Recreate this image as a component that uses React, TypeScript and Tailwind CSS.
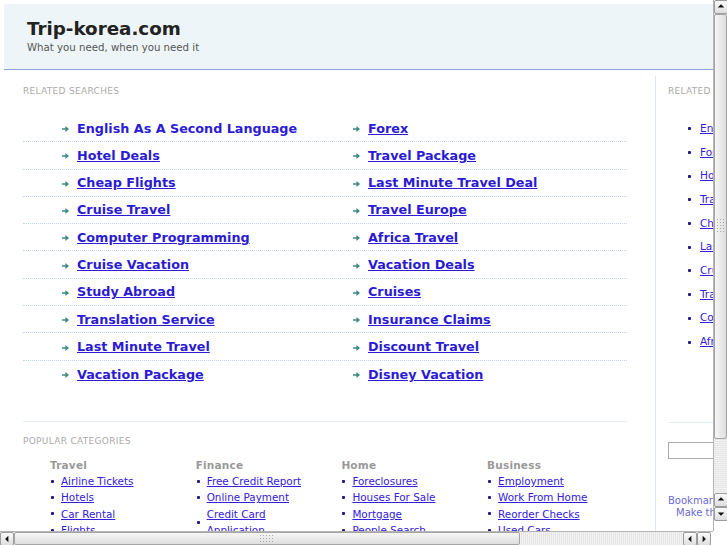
import React from "react";

const leftLinks = [
  "English As A Second Language",
  "Hotel Deals",
  "Cheap Flights",
  "Cruise Travel",
  "Computer Programming",
  "Cruise Vacation",
  "Study Abroad",
  "Translation Service",
  "Last Minute Travel",
  "Vacation Package",
];

const rightLinks = [
  "Forex",
  "Travel Package",
  "Last Minute Travel Deal",
  "Travel Europe",
  "Africa Travel",
  "Vacation Deals",
  "Cruises",
  "Insurance Claims",
  "Discount Travel",
  "Disney Vacation",
];

const sideLinks = [
  "English As A Second Language",
  "Forex",
  "Hotel Deals",
  "Travel Package",
  "Cheap Flights",
  "Last Minute Travel Deal",
  "Cruise Travel",
  "Travel Europe",
  "Computer Programming",
  "Africa Travel",
];

const categories = [
  { title: "Travel", links: ["Airline Tickets", "Hotels", "Car Rental", "Flights"] },
  { title: "Finance", links: ["Free Credit Report", "Online Payment", "Credit Card Application", "Bad Credit"] },
  { title: "Home", links: ["Foreclosures", "Houses For Sale", "Mortgage", "People Search"] },
  { title: "Business", links: ["Employment", "Work From Home", "Reorder Checks", "Used Cars"] },
];

const Arrow = () => (
  <svg width="7" height="6" viewBox="0 0 7 6" className="shrink-0 translate-y-[1px]">
    <path d="M0 2.2h3.4V0L7 3 3.4 6V3.8H0z" fill="#3d8a83" />
  </svg>
);

const Bullet = () => <span className="block w-[3px] h-[3px] bg-[#1c1a8a] shrink-0 rounded-[1px]" />;

const Grip = ({ vertical }: { vertical?: boolean }) => (
  <svg width={vertical ? 9 : 17} height={vertical ? 17 : 9} viewBox={vertical ? "0 0 9 17" : "0 0 17 9"}>
    {Array.from({ length: 15 }).map((_, i) => {
      const cols = vertical ? 3 : 5;
      const c = i % cols;
      const r = Math.floor(i / cols);
      return <rect key={i} x={1 + c * 3} y={1 + r * 3} width="1" height="1" fill="#a8a8a8" />;
    })}
  </svg>
);

const ArrowBtn = ({ dir }: { dir: "up" | "down" | "left" | "right" }) => {
  const paths: Record<string, string> = {
    up: "M3 7h7L6.5 3.5z",
    down: "M3 5h7L6.5 8.5z",
    left: "M8 3v7L4.5 6.5z",
    right: "M5 3v7L8.5 6.5z",
  };
  return (
    <div className="w-[14px] h-[14px] shrink-0 border border-[#9c9c9c] rounded-[2px] bg-gradient-to-b from-[#fbfbfb] to-[#dedede] flex items-center justify-center">
      <svg width="12" height="12" viewBox="0 0 13 13">
        <path d={paths[dir]} fill="#111" />
      </svg>
    </div>
  );
};

export default function App() {
  return (
    <div className="w-[727px] h-[545px] flex flex-col bg-white overflow-hidden font-['DejaVu_Sans',sans-serif]">
      <div className="flex flex-1 min-h-0">
        <div className="flex-1 min-w-0 overflow-hidden">
          <div className="w-[900px] pl-[4px] pt-[4px]">
            <div className="h-[66px] bg-[#eef5f8] border-b border-[#8fa2dc] pl-[23px] pt-[15px]">
              <div className="text-[18.3px] leading-[20px] font-bold text-[#222]">Trip-korea.com</div>
              <div className="text-[10.2px] leading-[13px] mt-[2px] text-[#555]">What you need, when you need it</div>
            </div>

            <div className="flex">
              <div className="w-[651px] shrink-0 pl-[19px] pt-[15px]">
                <div className="text-[9px] leading-[12px] tracking-[0.3px] text-[#aaa]">RELATED SEARCHES</div>
                <div className="w-[604px] mt-[18px]">
                  {leftLinks.map((l, i) => (
                    <div
                      key={l}
                      className={`flex h-[27.3px] ${i < leftLinks.length - 1 ? "border-b border-dotted border-[#c3d3ea]" : ""}`}
                    >
                      <div className="w-[302px] flex items-center gap-[8px] pl-[39px]">
                        <Arrow />
                        <a className={`text-[12.75px] font-bold text-[#2b1bd4] ${i === 0 ? "" : "underline"}`}>{l}</a>
                      </div>
                      <div className="w-[302px] flex items-center gap-[8px] pl-[28px]">
                        <Arrow />
                        <a className="text-[12.75px] font-bold text-[#2b1bd4] underline">{rightLinks[i]}</a>
                      </div>
                    </div>
                  ))}
                </div>
                <div className="w-[604px] h-px bg-[#e4edf5] mt-[33px]" />
                <div className="text-[9px] leading-[12px] tracking-[0.3px] text-[#aaa] mt-[13px]">POPULAR CATEGORIES</div>
                <div className="grid grid-cols-[145.7px_145.7px_145.7px_145.7px] ml-[27px] mt-[11px]">
                  {categories.map((c) => (
                    <div key={c.title}>
                      <div className="text-[10.5px] leading-[14px] font-bold text-[#999] tracking-[0.2px]">{c.title}</div>
                      <ul className="mt-[1px]">
                        {c.links.map((l) => (
                          <li key={l} className="flex items-center pl-[1px] gap-[7px]">
                            <Bullet />
                            <a className="w-[118px] text-[10.4px] leading-[16.4px] text-[#3320dd] underline">{l}</a>
                          </li>
                        ))}
                      </ul>
                    </div>
                  ))}
                </div>
              </div>

              <div className="w-[200px] shrink-0 mt-[6px] border-l border-[#dde7f1] pl-[12px] pt-[9px] h-[470px]">
                <div className="text-[9px] leading-[12px] tracking-[0.3px] text-[#aaa]">RELATED</div>
                <ul className="mt-[20px] pl-[20px]">
                  {sideLinks.map((l) => (
                    <li key={l} className="flex items-center h-[23.7px] gap-[9px]">
                      <Bullet />
                      <a className="text-[10.5px] text-[#3320dd] underline whitespace-nowrap">{l}</a>
                    </li>
                  ))}
                </ul>
                <div className="h-px bg-[#e4edf5] mt-[68px]" />
                <div className="mt-[19px] h-[17px] w-[140px] border border-[#aaa] bg-white" />
                <div className="mt-[36px] text-[10px] leading-[12px] text-[#6a6ad0]">Bookmark this page</div>
                <div className="pl-[8px] text-[10px] leading-[12px] text-[#6a6ad0]">Make this my homepage</div>
              </div>
            </div>
          </div>
        </div>

        <div className="w-[14px] shrink-0 flex flex-col bg-[#ececec] border-l border-[#b5b5b5]">
          <ArrowBtn dir="up" />
          <div className="h-[425px] shrink-0 border border-[#a4a4a4] rounded-[2px] bg-gradient-to-r from-[#f6f6f6] to-[#dedede] flex items-center justify-center">
            <Grip vertical />
          </div>
          <div className="flex-1 bg-[repeating-linear-gradient(0deg,#f2f2f2_0px,#f2f2f2_1px,#e6e6e6_1px,#e6e6e6_2px)]" />
          <ArrowBtn dir="up" />
          <ArrowBtn dir="down" />
          <div className="h-[10px] shrink-0 bg-white" />
        </div>
      </div>

      <div className="h-[14px] shrink-0 flex">
        <div className="flex-1 flex bg-[#ececec] border-t border-[#b5b5b5]">
          <ArrowBtn dir="left" />
          <div className="w-[506px] shrink-0 border border-[#a4a4a4] rounded-[2px] bg-gradient-to-b from-[#f6f6f6] to-[#dedede] flex items-center justify-center">
            <Grip />
          </div>
          <div className="flex-1 bg-[repeating-linear-gradient(90deg,#f2f2f2_0px,#f2f2f2_1px,#e6e6e6_1px,#e6e6e6_2px)]" />
          <ArrowBtn dir="left" />
          <ArrowBtn dir="right" />
          <div className="w-[2px] bg-white" />
        </div>
        <div className="w-[14px] shrink-0 bg-white" />
      </div>
    </div>
  );
}
